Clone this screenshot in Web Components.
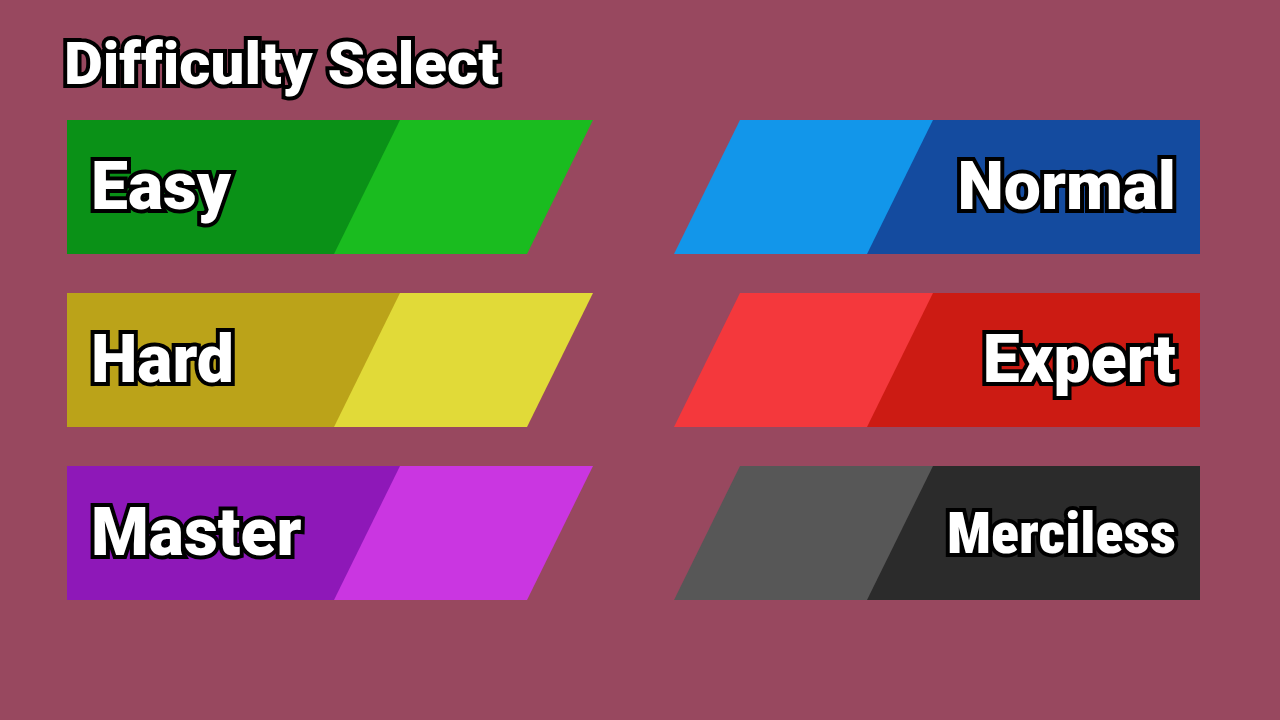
<!DOCTYPE html>
<html lang="en">
<head>
    <meta charset="utf-8">
    <meta name="viewport" content="width=device-width, initial-scale=1">
    <title>Difficulty Select</title>
    <style>
        body {
            margin: 0;
            min-height: 100vh;
            background-color: #98485f;
            color: #fff;
            font-family: Roboto, "Liberation Sans", sans-serif;
            font-weight: 900;
        }
    </style>
</head>
<body>
    <difficulty-screen>
        <span slot="title">Difficulty Select</span>
        <difficulty-button style="--label-color: #0a9117; --accent-color: #1abc1f">Easy</difficulty-button>
        <difficulty-button mirrored style="--label-color: #144b9f; --accent-color: #1296ea">Normal</difficulty-button>
        <difficulty-button style="--label-color: #bba319; --accent-color: #e1da38">Hard</difficulty-button>
        <difficulty-button mirrored style="--label-color: #cc1b13; --accent-color: #f4383c">Expert</difficulty-button>
        <difficulty-button style="--label-color: #8e18b8; --accent-color: #ca36e1">Master</difficulty-button>
        <difficulty-button mirrored condensed style="--label-color: #2b2b2b; --accent-color: #575757">Merciless</difficulty-button>
    </difficulty-screen>

    <script>
        window.customElements.define('difficulty-screen', class extends HTMLElement {
            constructor() {
                super();

                this.attachShadow({ mode: 'open' });
                this.shadowRoot.innerHTML = `
                    <style>
                        :host {
                            display: block;
                            padding: 32px 0 40px;
                        }
                        h1 {
                            margin: 0 0 24px;
                            padding: 0 64px;
                            font-size: 60px;
                            font-weight: inherit;
                            line-height: 64px;
                            font-variant-ligatures: none;
                            -webkit-text-stroke: 8px #000;
                            paint-order: stroke fill;
                        }
                        main {
                            display: grid;
                            grid-template-columns: 1fr 1fr;
                            gap: 39px 81px;
                            padding: 0 80px 0 67px;
                        }
                    </style>
                    <h1><slot name="title"></slot></h1>
                    <main><slot></slot></main>
                `;
            }
        });

        window.customElements.define('difficulty-button', class extends HTMLElement {
            constructor() {
                super();

                this.attachShadow({ mode: 'open' });
                this.shadowRoot.innerHTML = `
                    <style>
                        :host {
                            --slant: 66px;
                            display: block;
                        }
                        button {
                            display: flex;
                            width: 100%;
                            height: 134px;
                            margin: 0;
                            padding: 0;
                            border: 0;
                            background-color: var(--accent-color);
                            color: inherit;
                            font: inherit;
                            font-size: 66px;
                            line-height: 80px;
                            cursor: pointer;
                            clip-path: polygon(0 0, 100% 0, calc(100% - var(--slant)) 100%, 0 100%);
                        }
                        button:hover {
                            filter: brightness(1.1);
                        }
                        .label {
                            display: flex;
                            align-items: center;
                            box-sizing: border-box;
                            width: calc(100% - 193px);
                            height: 100%;
                            padding: 0 24px;
                            background-color: var(--label-color);
                            white-space: nowrap;
                            -webkit-text-stroke: 8px #000;
                            paint-order: stroke fill;
                            clip-path: polygon(0 0, 100% 0, calc(100% - var(--slant)) 100%, 0 100%);
                        }
                        :host([mirrored]) button {
                            justify-content: flex-end;
                        }
                        :host([mirrored]) .label {
                            justify-content: flex-end;
                        }
                        :host([mirrored]) button,
                        :host([mirrored]) .label {
                            clip-path: polygon(var(--slant) 0, 100% 0, 100% 100%, 0 100%);
                        }
                        /* long names get the narrow face so they stay inside the label */
                        :host([condensed]) button {
                            font-family: "Roboto Condensed", Roboto, sans-serif;
                            font-size: 58px;
                        }
                    </style>
                    <button type="button"><span class="label"><slot></slot></span></button>
                `;
            }
        });
    </script>
</body>
</html>
